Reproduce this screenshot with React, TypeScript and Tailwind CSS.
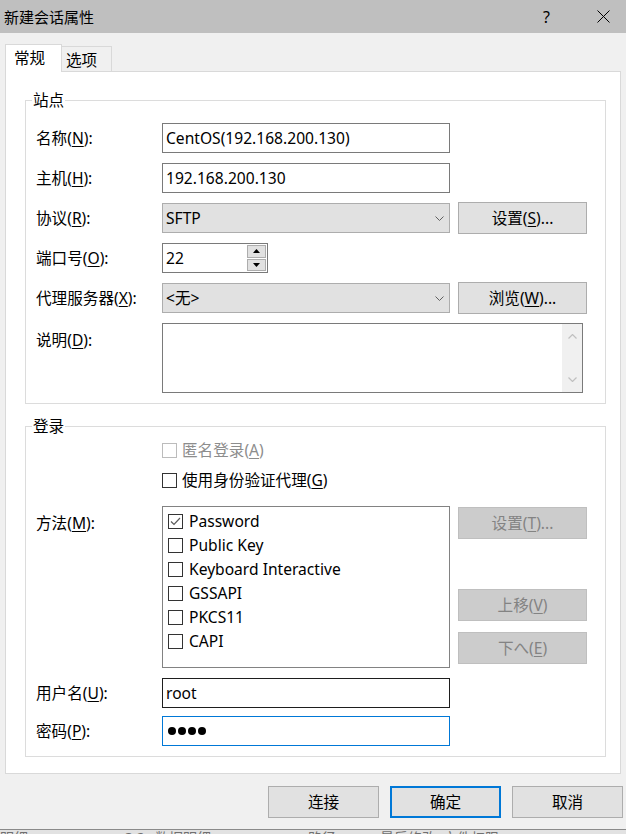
import React from "react";

const U = ({ c }: { c: string }) => (
  <span className="underline decoration-1 underline-offset-[2px]">{c}</span>
);

function Box({ checked = false, disabled = false }: { checked?: boolean; disabled?: boolean }) {
  return (
    <span
      className={
        disabled
          ? "w-[15px] h-[15px] border border-[#bcbcbc] bg-white flex items-center justify-center shrink-0"
          : "w-[15px] h-[15px] border border-[#333333] bg-white flex items-center justify-center shrink-0"
      }
    >
      {checked && (
        <svg width="13" height="13" viewBox="0 0 13 13">
          <polyline points="2,6.5 5,9.5 11,3" fill="none" stroke="#5a5a5a" strokeWidth="1.2" />
        </svg>
      )}
    </span>
  );
}

function Chevron() {
  return (
    <svg width="9" height="5" viewBox="0 0 9 5" className="shrink-0">
      <polyline points="0.5,0.5 4.5,4.5 8.5,0.5" fill="none" stroke="#606060" strokeWidth="1" />
    </svg>
  );
}

function Btn({ children, disabled = false }: { children: React.ReactNode; disabled?: boolean }) {
  return (
    <div
      className={
        disabled
          ? "w-[129px] h-[32px] bg-[#cccccc] border border-[#bfbfbf] text-[#838383] flex items-center justify-center shrink-0"
          : "w-[129px] h-[32px] bg-[#e1e1e1] border border-[#adadad] flex items-center justify-center shrink-0"
      }
    >
      {children}
    </div>
  );
}

export default function App() {
  const methods = [
    { t: "Password", c: true },
    { t: "Public Key", c: false },
    { t: "Keyboard Interactive", c: false },
    { t: "GSSAPI", c: false },
    { t: "PKCS11", c: false },
    { t: "CAPI", c: false },
  ];
  return (
    <div className="w-[626px] h-[834px] bg-[#f0f0f0] flex flex-col overflow-hidden text-[15.6px] leading-[20px] text-black [font-family:'Noto_Sans','Noto_Sans_CJK_SC',sans-serif]">
      {/* Title bar */}
      <div className="h-[33px] bg-[#bfbfbf] flex items-center pl-[4px] shrink-0">
        <span className="text-[15px]">新建会话属性</span>
        <span className="ml-auto text-[16px]">?</span>
        <svg width="13" height="13" viewBox="0 0 13 13" className="ml-[47px] mr-[16px]">
          <line x1="0.5" y1="0.5" x2="12.5" y2="12.5" stroke="#000" strokeWidth="1" />
          <line x1="12.5" y1="0.5" x2="0.5" y2="12.5" stroke="#000" strokeWidth="1" />
        </svg>
      </div>

      {/* Tabs */}
      <div className="mt-[11px] pl-[5px] flex items-end -mb-px relative z-10 shrink-0">
        <div className="w-[57px] h-[28px] bg-white border border-[#d9d9d9] border-b-0 pl-[8px] pt-[3px]">常规</div>
        <div className="w-[50px] h-[25px] mb-px bg-[#f0f0f0] border border-l-0 border-b-0 border-[#d9d9d9] pl-[4px] pt-[3px]">选项</div>
      </div>

      {/* Panel */}
      <div className="ml-[5px] w-[616px] h-[703px] bg-white border border-[#d9d9d9] pl-[19px] shrink-0">
        {/* 站点 */}
        <fieldset className="w-[581px] mt-[18px] border border-[#dcdcdc] pl-[10px] pt-[13px] pb-[10px]">
          <legend className="-ml-[4px] px-[1px]">站点</legend>
          <div className="flex flex-col gap-[10px]">
            <div className="flex items-center h-[30px]">
              <span className="w-[126px]">名称(<U c="N" />):</span>
              <div className="w-[288px] h-[30px] border border-[#7a7a7a] pl-[3px] flex items-center">CentOS(192.168.200.130)</div>
            </div>
            <div className="flex items-center h-[30px]">
              <span className="w-[126px]">主机(<U c="H" />):</span>
              <div className="w-[288px] h-[30px] border border-[#7a7a7a] pl-[3px] flex items-center">192.168.200.130</div>
            </div>
            <div className="flex items-center h-[30px]">
              <span className="w-[126px]">协议(<U c="R" />):</span>
              <div className="w-[288px] h-[30px] bg-[#e1e1e1] border border-[#adadad] pl-[3px] pr-[5px] flex items-center justify-between">
                <span>SFTP</span>
                <Chevron />
              </div>
              <div className="ml-[8px]">
                <Btn>设置(<U c="S" />)...</Btn>
              </div>
            </div>
            <div className="flex items-center h-[30px]">
              <span className="w-[126px]">端口号(<U c="O" />):</span>
              <div className="w-[106px] h-[30px] border border-[#7a7a7a] flex">
                <div className="flex-1 pl-[3px] flex items-center">22</div>
                <div className="w-[21px] flex flex-col gap-px p-px bg-white">
                  <div className="flex-1 bg-[#e1e1e1] border border-[#adadad] flex items-center justify-center">
                    <svg width="7" height="4" viewBox="0 0 7 4"><polygon points="3.5,0 7,4 0,4" fill="#000" /></svg>
                  </div>
                  <div className="flex-1 bg-[#e1e1e1] border border-[#adadad] flex items-center justify-center">
                    <svg width="7" height="4" viewBox="0 0 7 4"><polygon points="0,0 7,0 3.5,4" fill="#000" /></svg>
                  </div>
                </div>
              </div>
            </div>
            <div className="flex items-center h-[30px]">
              <span className="w-[126px]">代理服务器(<U c="X" />):</span>
              <div className="w-[288px] h-[30px] bg-[#e1e1e1] border border-[#adadad] pl-[3px] pr-[5px] flex items-center justify-between">
                <span>&lt;无&gt;</span>
                <Chevron />
              </div>
              <div className="ml-[8px]">
                <Btn>浏览(<U c="W" />)...</Btn>
              </div>
            </div>
            <div className="flex items-start h-[70px]">
              <span className="w-[126px] pt-[7px]">说明(<U c="D" />):</span>
              <div className="w-[421px] h-[70px] border border-[#7a7a7a] flex justify-end">
                <div className="w-[20px] bg-[#f0f0f0] flex flex-col items-center justify-between pt-[10px] pb-[10px]">
                  <svg width="9" height="5" viewBox="0 0 9 5"><polyline points="0.5,4.5 4.5,0.5 8.5,4.5" fill="none" stroke="#c0c0c0" strokeWidth="1.2" /></svg>
                  <svg width="9" height="5" viewBox="0 0 9 5"><polyline points="0.5,0.5 4.5,4.5 8.5,0.5" fill="none" stroke="#c0c0c0" strokeWidth="1.2" /></svg>
                </div>
              </div>
            </div>
          </div>
        </fieldset>

        {/* 登录 */}
        <fieldset className="w-[581px] mt-[12px] border border-[#dcdcdc] pl-[10px] pt-[4px] pb-[10px]">
          <legend className="-ml-[4px] px-[1px]">登录</legend>
          <div className="flex items-center h-[20px] pl-[126px] gap-[5px] text-[#8d8d8d]">
            <Box disabled />
            <span>匿名登录(<U c="A" />)</span>
          </div>
          <div className="flex items-center h-[20px] mt-[10px] pl-[126px] gap-[5px]">
            <Box />
            <span>使用身份验证代理(<U c="G" />)</span>
          </div>
          <div className="flex items-start mt-[16px]">
            <span className="w-[126px] pt-[7px]">方法(<U c="M" />):</span>
            <div className="w-[288px] h-[162px] border border-[#828282] pt-[2px] pl-[5px]">
              {methods.map((m) => (
                <div key={m.t} className="h-[24px] flex items-center gap-[6px]">
                  <Box checked={m.c} />
                  <span>{m.t}</span>
                </div>
              ))}
            </div>
            <div className="ml-[8px] flex flex-col">
              <div className="mt-[1px]">
                <Btn disabled>设置(<U c="T" />)...</Btn>
              </div>
              <div className="mt-[50px]">
                <Btn disabled>上移(<U c="V" />)</Btn>
              </div>
              <div className="mt-[11px]">
                <Btn disabled>下へ(<U c="E" />)</Btn>
              </div>
            </div>
          </div>
          <div className="flex items-center h-[30px] mt-[10px]">
            <span className="w-[126px]">用户名(<U c="U" />):</span>
            <div className="w-[288px] h-[30px] border border-[#1e1e1e] pl-[3px] flex items-center">root</div>
          </div>
          <div className="flex items-center h-[30px] mt-[8px]">
            <span className="w-[126px]">密码(<U c="P" />):</span>
            <div className="w-[288px] h-[30px] border border-[#0078d7] pl-[5px] flex items-center gap-[2px]">
              <span className="w-[8px] h-[8px] rounded-full bg-black" />
              <span className="w-[8px] h-[8px] rounded-full bg-black" />
              <span className="w-[8px] h-[8px] rounded-full bg-black" />
              <span className="w-[8px] h-[8px] rounded-full bg-black" />
            </div>
          </div>
        </fieldset>
      </div>

      {/* Bottom buttons */}
      <div className="mt-[12px] flex justify-end gap-[11px] pr-[3px] shrink-0">
        <div className="w-[111px] h-[32px] bg-[#e1e1e1] border border-[#adadad] flex items-center justify-center">连接</div>
        <div className="w-[111px] h-[32px] bg-[#e1e1e1] border-2 border-[#0078d7] flex items-center justify-center">确定</div>
        <div className="w-[111px] h-[32px] bg-[#e1e1e1] border border-[#adadad] flex items-center justify-center">取消</div>
      </div>

      {/* Window behind, cut off */}
      <div className="mt-[11px] flex-1 bg-[#e2e2e2] border-t border-[#8a8a8a] overflow-hidden text-[#707070] text-[14px] leading-[14px] relative">
        <div className="flex pt-[1px] whitespace-nowrap">
          <span className="w-[125px]">明细</span>
          <span className="w-[30px]">3.2</span>
          <span className="w-[153px]">数据明细</span>
          <span className="w-[72px]">路径</span>
          <span className="w-[63px]">最后修改...</span>
          <span>文件权限</span>
        </div>
      </div>
    </div>
  );
}
